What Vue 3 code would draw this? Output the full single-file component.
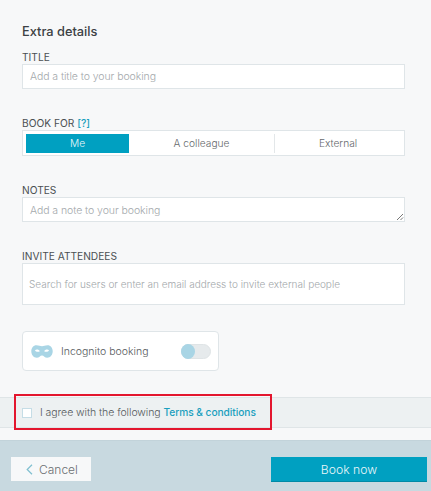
<script setup>
const options = [
  { label: 'Me', active: true },
  { label: 'A colleague', active: false },
  { label: 'External', active: false }
]
</script>

<template>
  <div class="page">
    <main class="form">
      <h2 class="heading">Extra details</h2>

      <section class="field title-field">
        <label class="label">TITLE</label>
        <div class="input single">Add a title to your booking</div>
      </section>

      <section class="field book-field">
        <label class="label">BOOK FOR <a class="help">[?]</a></label>
        <div class="segments">
          <div
            v-for="o in options"
            :key="o.label"
            class="segment"
            :class="{ active: o.active }"
          >{{ o.label }}</div>
        </div>
      </section>

      <section class="field notes-field">
        <label class="label">NOTES</label>
        <div class="input notes">
          Add a note to your booking
          <svg class="grip" width="8" height="8" viewBox="0 0 8 8">
            <path d="M1 7L7 1M4.5 7L7 4.5" stroke="#777" stroke-width="1" fill="none" />
          </svg>
        </div>
      </section>

      <section class="field invite-field">
        <label class="label">INVITE ATTENDEES</label>
        <div class="input invite">Search for users or enter an email address to invite external people</div>
      </section>

      <div class="incognito">
        <svg class="mask" width="22" height="13" viewBox="0 0 22 13">
          <path
            fill-rule="evenodd"
            fill="#a9d5e5"
            d="M5.5 0.3C7.8 0.3 9.4 1.3 11 1.3C12.6 1.3 14.2 0.3 16.5 0.3C19.7 0.3 21.7 3 21.7 6.2C21.7 9.8 19.3 12.7 16.2 12.7C13.8 12.7 12.8 10.4 11 10.4C9.2 10.4 8.2 12.7 5.8 12.7C2.7 12.7 0.3 9.8 0.3 6.2C0.3 3 2.3 0.3 5.5 0.3ZM4 5.2C4.6 6.9 7.4 7.3 8.8 6.2C8.2 4.6 5.4 4.1 4 5.2ZM18 5.2C17.4 6.9 14.6 7.3 13.2 6.2C13.8 4.6 16.6 4.1 18 5.2Z"
          />
        </svg>
        <span class="incognito-text">Incognito booking</span>
        <span class="toggle"><span class="knob"></span></span>
      </div>
    </main>

    <div class="terms">
      <span class="checkbox"></span>
      <span>I agree with the following <a class="link">Terms &amp; conditions</a></span>
      <div class="highlight"></div>
    </div>

    <footer class="footer">
      <button class="cancel">
        <svg width="7" height="11" viewBox="0 0 7 11">
          <path d="M6 0.8L1.2 5.5L6 10.2" stroke="#7fbfd0" stroke-width="1.2" fill="none" />
        </svg>
        Cancel
      </button>
      <button class="book">Book now</button>
    </footer>
  </div>
</template>

<style scoped>
.page {
  width: 431px;
  height: 491px;
  overflow: hidden;
  display: flex;
  flex-direction: column;
  background: #f7f8f9;
  font-family: Inter, Lato, sans-serif;
  font-weight: 300;
  color: #4a4f52;
}
.form {
  height: 397px;
  box-sizing: border-box;
  padding: 24px 26px 0 22px;
  display: flex;
  flex-direction: column;
}
.heading {
  margin: 0;
  font-size: 12.8px;
  line-height: 16px;
  font-weight: 500;
  color: #3c4144;
}
.field {
  display: flex;
  flex-direction: column;
}
.title-field { margin-top: 10px; }
.book-field { margin-top: 27px; }
.notes-field { margin-top: 27px; }
.invite-field { margin-top: 27px; }
.label {
  font-size: 10.2px;
  line-height: 14px;
  height: 14px;
  color: #4a4f52;
  font-weight: 400;
}
.help {
  color: #1a9fbe;
  font-weight: 500;
}
.input {
  box-sizing: border-box;
  background: #fff;
  border: 1px solid #dfe5e8;
  color: #a3a8ab;
  font-size: 10.5px;
  letter-spacing: -0.07px;
}
.single {
  height: 25px;
  line-height: 23px;
  padding-left: 7px;
}
.notes {
  position: relative;
  height: 25px;
  line-height: 25px;
  padding-left: 7px;
}
.grip {
  position: absolute;
  right: 0;
  bottom: 0;
}
.invite {
  height: 42px;
  line-height: 41px;
  padding-left: 6px;
  font-size: 10px;
  letter-spacing: 0;
}
.segments {
  box-sizing: border-box;
  height: 26px;
  display: grid;
  grid-template-columns: 103px 145px 1fr;
  align-items: center;
  padding: 3px;
  background: #fff;
  border: 1px solid #dfe5e8;
  font-size: 10.2px;
  color: #65696c;
}
.segment {
  height: 19px;
  line-height: 19px;
  text-align: center;
}
.segment.active {
  background: #00a0c1;
  color: #eaf7fa;
}
.segment:last-child {
  border-left: 1px solid #e3e7e9;
}
.incognito {
  box-sizing: border-box;
  width: 197px;
  height: 40px;
  margin-top: 26px;
  display: flex;
  align-items: center;
  padding: 0 7px 0 8px;
  background: #fff;
  border: 1px solid #dfe5e8;
  border-radius: 4px;
  font-size: 10.5px;
  color: #55595c;
}
.mask {
  flex: none;
}
.incognito-text {
  margin-left: 8px;
}
.toggle {
  margin-left: auto;
  width: 30px;
  height: 15px;
  border-radius: 8px;
  background: #e6eaec;
  border: 1px solid #dfe4e6;
  box-sizing: border-box;
  display: flex;
}
.knob {
  width: 14px;
  height: 15px;
  margin-top: -1px;
  margin-left: -1px;
  border-radius: 50%;
  background: #a9d5e5;
}
.terms {
  position: relative;
  box-sizing: border-box;
  height: 31px;
  display: flex;
  align-items: center;
  padding-left: 22px;
  gap: 8px;
  background: #edf1f2;
  border-top: 1px solid #dfe5e7;
  border-bottom: 1px solid #dfe5e7;
  font-size: 10.5px;
  letter-spacing: -0.06px;
  color: #55595c;
}
.link {
  color: #1a9fbe;
  font-weight: 500;
  font-size: 10.2px;
}
.checkbox {
  box-sizing: border-box;
  width: 10px;
  height: 10px;
  background: #fff;
  border: 1px solid #c5dde6;
}
.highlight {
  position: absolute;
  left: 14px;
  top: -4px;
  width: 258px;
  height: 36px;
  box-sizing: border-box;
  border: 2px solid #e3162e;
}
.footer {
  margin-top: 12px;
  flex: 1;
  background: #c8d9e0;
  border-top: 1px solid #c2d3da;
  box-sizing: border-box;
  display: flex;
  justify-content: space-between;
  align-items: flex-start;
  padding: 16px 4px 0 11px;
}
.cancel {
  box-sizing: border-box;
  width: 80px;
  height: 24px;
  display: flex;
  align-items: center;
  gap: 6px;
  padding: 0 0 0 15px;
  background: #f7f8f9;
  border: none;
  color: #6a6e71;
  font-family: inherit;
  font-weight: 300;
  font-size: 12px;
}
.book {
  box-sizing: border-box;
  width: 156px;
  height: 25px;
  background: #00a0c1;
  border: none;
  border-bottom: 1px solid #008aa6;
  color: #e8f6fa;
  font-family: inherit;
  font-weight: 300;
  font-size: 12.2px;
}
</style>

<style>
body { background: #f7f8f9; }
</style>
